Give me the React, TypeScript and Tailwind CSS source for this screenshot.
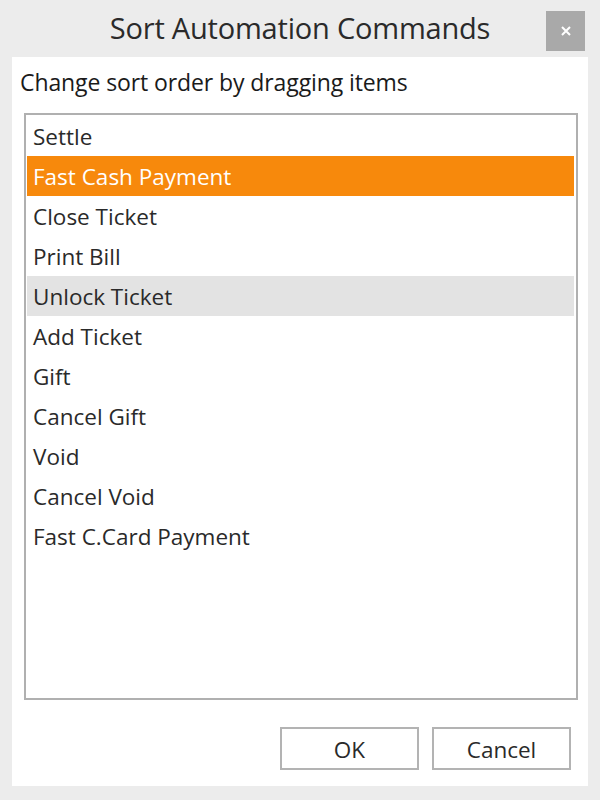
import React from "react";

const items = [
  "Settle",
  "Fast Cash Payment",
  "Close Ticket",
  "Print Bill",
  "Unlock Ticket",
  "Add Ticket",
  "Gift",
  "Cancel Gift",
  "Void",
  "Cancel Void",
  "Fast C.Card Payment",
];

export default function App() {
  return (
    <div
      className="w-[600px] h-[800px] bg-[#ececec] flex flex-col px-[12px] pb-[14px] text-[#262626]"
      style={{ fontFamily: '"Open Sans", "Noto Sans", sans-serif' }}
    >
      <div className="relative h-[57px] flex items-center justify-center">
        <div className="text-[29px] leading-none tracking-[-0.2px] pb-[2px] text-[#2a2a2a]">
          Sort Automation Commands
        </div>
        <div className="absolute right-[3px] top-[11px] w-[39px] h-[40px] bg-[#a9a9a9] flex items-center justify-center">
          <svg width="12" height="12" viewBox="0 0 12 12">
            <path d="M2 2 L10 10 M10 2 L2 10" stroke="white" strokeWidth="2" />
          </svg>
        </div>
      </div>
      <div className="flex-1 bg-white flex flex-col">
        <div className="pl-[8px] pt-[8px] h-[56px] text-[23px] leading-[34px] tracking-[-0.1px] text-[#1a1a1a]">
          Change sort order by dragging items
        </div>
        <div className="ml-[12px] mr-[10px] h-[587px] border-2 border-[#b0b0b0] pt-[1px] pl-[1px] pr-[2px]">
          {items.map((it, i) => (
            <div
              key={it}
              className={
                "h-[40px] flex items-center pl-[6px] pt-[2px] text-[22.5px] " +
                (i === 1
                  ? "bg-[#f7890c] text-white"
                  : i === 4
                  ? "bg-[#e3e3e3] text-[#2a2a2a]"
                  : "text-[#2a2a2a]")
              }
            >
              {it}
            </div>
          ))}
        </div>
        <div className="flex justify-end gap-[13px] mt-[27px] mr-[17px]">
          <div className="w-[139px] h-[43px] border-2 border-[#b3b3b3] flex items-center justify-center pt-[2px] text-[22.5px] text-[#2a2a2a]">
            OK
          </div>
          <div className="w-[139px] h-[43px] border-2 border-[#b3b3b3] flex items-center justify-center pt-[2px] text-[22.5px] text-[#2a2a2a]">
            Cancel
          </div>
        </div>
      </div>
    </div>
  );
}
